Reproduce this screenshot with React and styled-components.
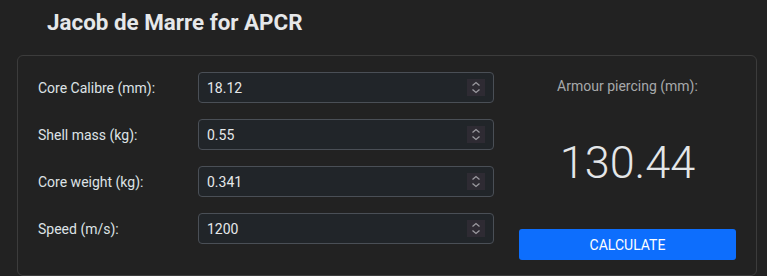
import React from "react";
import styled, { createGlobalStyle } from "styled-components";

const Global = createGlobalStyle`
  html, body { margin: 0; padding: 0; background: #222222; }
  body { font-family: Roboto, "Liberation Sans", Arial, sans-serif; color: #dee2e6; }
  * { box-sizing: border-box; }
`;

const Page = styled.div`
  width: 767px;
  height: 276px;
  padding: 0 10px 0 17px;
  overflow: hidden;
`;

const Title = styled.h1`
  margin: 0;
  padding: 9px 0 0 30px;
  height: 55px;
  font-size: 22.4px;
  font-weight: 700;
  color: #e6e8ea;
  line-height: 26px;
`;

const Card = styled.div`
  width: 740px;
  height: 221px;
  border: 1px solid #3c3c3c;
  border-radius: 6px;
  background: #222222;
  padding: 16px 20px 0 20px;
  display: flex;
  gap: 25px;
`;

const Form = styled.div`
  display: flex;
  flex-direction: column;
  gap: 16px;
`;

const Row = styled.div`
  display: grid;
  grid-template-columns: 160px 296px;
  align-items: center;
  height: 31px;
`;

const Label = styled.label`
  font-size: 14px;
  color: #dee2e6;
`;

const Field = styled.div`
  position: relative;
  height: 31px;
  border: 1px solid #4a4f56;
  border-radius: 4px;
  background: #212529;
  display: flex;
  align-items: center;
  padding: 0 8px 0 8px;
`;

const Value = styled.span`
  flex: 1;
  font-size: 14px;
  color: #e6e8ea;
`;

const Spin = styled.span`
  width: 18px;
  height: 17px;
  background: #2e2b33;
  display: flex;
  align-items: center;
  justify-content: center;
`;

const Result = styled.div`
  width: 217px;
  display: flex;
  flex-direction: column;
  align-items: center;
`;

const ResultLabel = styled.div`
  margin-top: 6px;
  font-size: 14px;
  color: #a7a9ab;
`;

const ResultValue = styled.div`
  margin-top: 44px;
  font-size: 45px;
  font-weight: 300;
  color: #e4e6e8;
  line-height: 50px;
`;

const Button = styled.button`
  margin-top: 41px;
  width: 217px;
  height: 31px;
  border: none;
  border-radius: 3px;
  background: #0d6efd;
  color: #ffffff;
  font-family: Roboto, "Liberation Sans", Arial, sans-serif;
  font-size: 14px;
`;

const Spinner = () => (
  <Spin>
    <svg width="10" height="13" viewBox="0 0 10 13" fill="none" stroke="#9b9aa0" strokeWidth="1.3">
      <path d="M1.5 4.5 L5 1.5 L8.5 4.5" />
      <path d="M1.5 8.5 L5 11.5 L8.5 8.5" />
    </svg>
  </Spin>
);

const fields = [
  ["Core Calibre (mm):", "18.12"],
  ["Shell mass (kg):", "0.55"],
  ["Core weight (kg):", "0.341"],
  ["Speed (m/s):", "1200"],
];

export default function App() {
  return (
    <Page>
      <Global />
      <Title>Jacob de Marre for APCR</Title>
      <Card>
        <Form>
          {fields.map(([l, v]) => (
            <Row key={l}>
              <Label>{l}</Label>
              <Field>
                <Value>{v}</Value>
                <Spinner />
              </Field>
            </Row>
          ))}
        </Form>
        <Result>
          <ResultLabel>Armour piercing (mm):</ResultLabel>
          <ResultValue>130.44</ResultValue>
          <Button>CALCULATE</Button>
        </Result>
      </Card>
    </Page>
  );
}
